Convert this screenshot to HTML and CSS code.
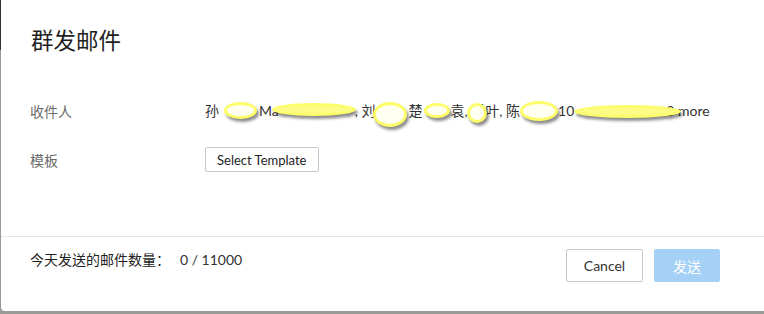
FILE: index.html
```html
<!DOCTYPE html>
<html lang="zh">
<head>
<meta charset="utf-8">
<title>群发邮件</title>
<link rel="stylesheet" href="styles.css">
</head>
<body>
<div class="backdrop">
  <div class="modal">
    <div class="modal-header">
      <h1 class="modal-title">群发邮件</h1>
    </div>
    <div class="modal-body">
      <div class="form-row">
        <div class="form-label">收件人</div>
        <div class="form-value recipients">
          <span>孙</span><span class="redact r1"></span><span>Ma</span><span class="redact r2"></span><span>, 刘</span><span class="redact r3"></span><span>楚</span><span class="redact r4"></span><span>袁, 乐</span><span class="redact r5"></span><span>叶, 陈</span><span class="redact r6"></span><span>10</span><span class="redact r7"></span><span>3 more</span>
        </div>
      </div>
      <div class="form-row template-row">
        <div class="form-label">模板</div>
        <div class="form-value">
          <button class="btn btn-small">Select Template</button>
        </div>
      </div>
    </div>
    <div class="modal-footer">
      <div class="quota">今天发送的邮件数量：<span class="quota-num">0 / 11000</span></div>
      <div class="actions">
        <button class="btn btn-default">Cancel</button>
        <button class="btn btn-primary" disabled>发送</button>
      </div>
    </div>
  </div>
</div>
</body>
</html>
```

FILE: styles.css
```css
html, body {
  margin: 0;
  padding: 0;
  height: 100%;
}
body {
  font-family: Lato, "Noto Sans CJK SC", sans-serif;
  background: #8c8c8c;
  overflow: hidden;
}
.backdrop {
  height: 314px;
  background: linear-gradient(to bottom, #2d323a 0, #2d323a 50px, #9a9a96 50px, #9a9a96 100%);
  display: flex;
  flex-direction: column;
}
.modal {
  margin-left: 1px;
  height: 311px;
  background: #fff;
  border-bottom-left-radius: 4px;
  display: flex;
  flex-direction: column;
  box-sizing: border-box;
}
.modal-header {
  padding: 24px 30px 0 30px;
  height: 70px;
  box-sizing: border-box;
}
.modal-title {
  margin: 0;
  font-size: 22.5px;
  line-height: 30px;
  font-weight: normal;
  color: #1e1e1e;
  font-family: "Noto Sans CJK SC", sans-serif;
}
.modal-body {
  padding: 31px 30px 0 29px;
  height: 167px;
  box-sizing: border-box;
  border-bottom: 1px solid #e6e6e6;
}
.form-row {
  display: flex;
  align-items: center;
  min-height: 20px;
}
.template-row {
  margin-top: 26px;
}
.form-label {
  width: 175px;
  flex: none;
  font-size: 14px;
  color: #6b6b6b;
  font-family: "Noto Sans CJK SC", sans-serif;
  line-height: 20px;
}
.form-value {
  font-size: 14px;
  color: #333;
  line-height: 20px;
  white-space: nowrap;
}
.recipients {
  font-family: Lato, "Noto Sans CJK SC", sans-serif;
}
.redact {
  display: inline-block;
  position: relative;
  vertical-align: top;
  height: 20px;
}
.redact::after {
  content: "";
  position: absolute;
  border: 3px solid #fdfd6a;
  background: #fffff2;
  border-radius: 50%;
  box-shadow: 2px 3px 3px rgba(0, 0, 0, 0.45);
  box-sizing: border-box;
}
.r1 { width: 40px; }
.r1::after { left: 5px; top: 1px; width: 33px; height: 17px; }
.r2 { width: 76px; }
.r2::after { left: -7px; top: 2px; width: 84px; height: 13px; background: #fbfb86; }
.r3 { width: 33px; }
.r3::after { left: -3px; top: 1px; width: 34px; height: 25px; }
.r4 { width: 28px; }
.r4::after { left: 1px; top: 2px; width: 26px; height: 15px; }
.r5 { width: 0; }
.r5::after { left: -18px; top: 2px; width: 20px; height: 20px; }
.r6 { width: 38px; }
.r6::after { left: 0px; top: 0px; width: 38px; height: 20px; }
.r7 { width: 92px; }
.r7::after { left: 0px; top: 4px; width: 107px; height: 13px; background: #fbfb86; }

.btn {
  font-family: Lato, "Noto Sans CJK SC", sans-serif;
  background: #fff;
  border: 1px solid #c8c8c8;
  border-radius: 2px;
  color: #222;
  cursor: pointer;
  padding: 0;
  margin: 0;
}
.btn-small {
  font-size: 13px;
  height: 25px;
  padding: 0 11px;
}
.modal-footer {
  display: flex;
  justify-content: space-between;
  align-items: flex-start;
  padding: 12px 44px 0 29px;
}
.quota {
  font-size: 14px;
  line-height: 20px;
  color: #222;
  font-family: "Noto Sans CJK SC", sans-serif;
}
.quota-num {
  font-family: Lato, sans-serif;
  margin-left: 10px;
  color: #333;
}
.actions {
  display: flex;
  gap: 11px;
}
.btn-default {
  width: 77px;
  height: 33px;
  font-size: 14px;
  color: #333;
}
.btn-primary {
  width: 66px;
  height: 33px;
  font-size: 14px;
  background: #a5d1f6;
  border-color: #a5d1f6;
  color: #fff;
  font-family: "Noto Sans CJK SC", sans-serif;
  cursor: default;
}
```
